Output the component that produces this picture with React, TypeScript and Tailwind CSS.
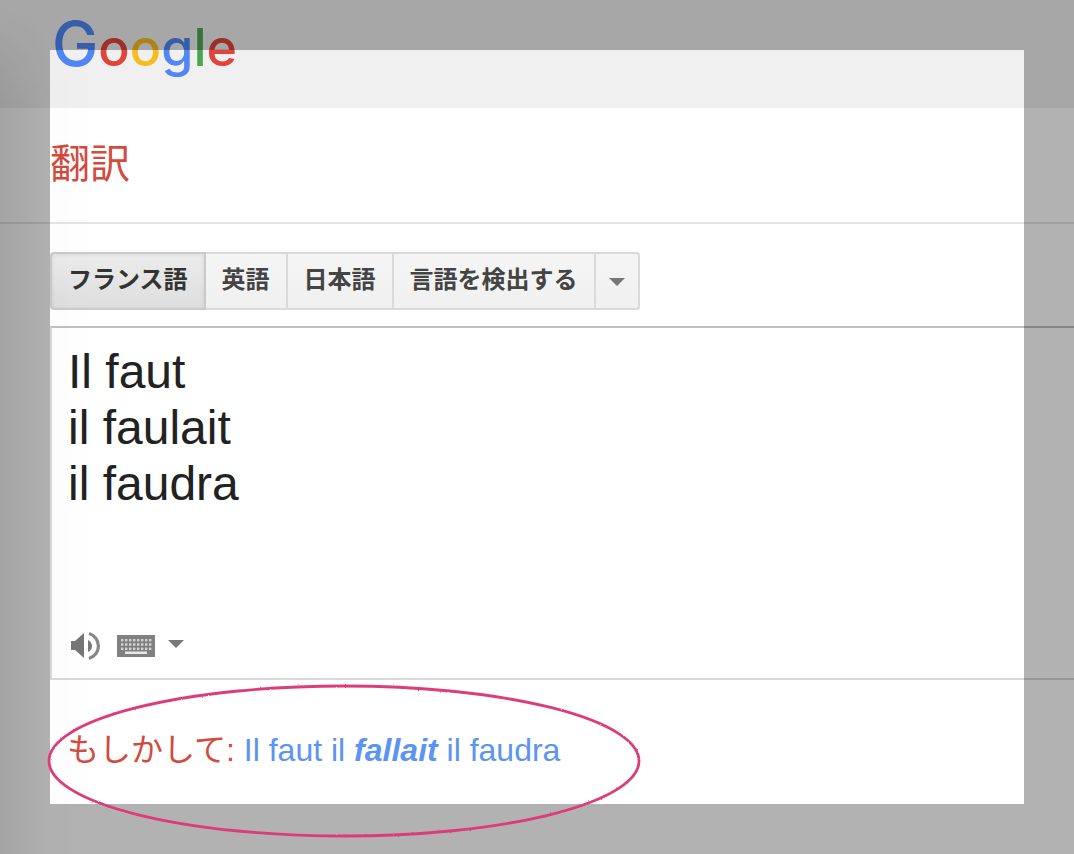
import { useState } from 'react';
import { clsx } from 'clsx';

const LOGO_LETTERS = [
    { char: 'G', style: 'text-[62px] text-[#5087f5]' },
    { char: 'o', style: 'text-[#e1443a]' },
    { char: 'o', style: 'text-[#f8bc20]' },
    { char: 'g', style: 'text-[#5087f5]' },
    { char: 'l', style: 'text-[#4ba652]' },
    { char: 'e', style: 'text-[#e1443a]' },
];

const LANGUAGES = ['フランス語', '英語', '日本語', '言語を検出する'];

const Logo = () => (
    <a href="#" aria-label="Google" className="block font-[Inter,sans-serif] text-[52px] leading-[60px] font-medium">
        {LOGO_LETTERS.map((letter, i) => (
            <span key={i} className={letter.style}>{letter.char}</span>
        ))}
    </a>
);

const Caret = () => (
    <svg width="16" height="8" viewBox="0 0 16 8" aria-hidden="true">
        <path d="M0 0h16L8 8z" fill="#777" />
    </svg>
);

const SpeakerIcon = () => (
    <svg width="30" height="30" viewBox="0 0 30 30" aria-hidden="true">
        <path d="M0 10h4l9-8v25l-9-8H0z" fill="#777" />
        <path d="M17 9q4 2 4 6t-4 6z" fill="#777" />
        <path d="M18 2.5a13 13 0 0 1 0 25" fill="none" stroke="#888" strokeWidth="3.2" />
    </svg>
);

const KeyboardIcon = () => (
    <svg width="40" height="24" viewBox="0 0 40 24" aria-hidden="true">
        <rect x="1" y="1" width="38" height="22" fill="#808080" />
        {[5, 9.3, 13.6].map((y) =>
            [5, 9, 13, 17, 21, 25, 29, 33].map((x) => (
                <rect key={`${x}-${y}`} x={x} y={y} width="2.4" height="2.4" fill="#d4d4d4" />
            ))
        )}
        <rect x="9" y="17.5" width="22" height="2.5" fill="#e8e8e8" />
    </svg>
);

// Hand-drawn ring around the suggestion
const Ring = () => (
    <svg
        className="absolute top-1 left-[45px] z-20 pointer-events-none"
        width="598"
        height="156"
        viewBox="0 0 598 156"
        aria-hidden="true"
    >
        <filter id="chalk">
            <feTurbulence type="fractalNoise" baseFrequency="0.6" numOctaves="1" seed="4" />
            <feDisplacementMap in="SourceGraphic" scale="2" xChannelSelector="R" yChannelSelector="G" />
        </filter>
        <ellipse cx="299" cy="77" rx="295" ry="75" fill="none" stroke="#dc3c79" strokeWidth="2.8" filter="url(#chalk)" />
    </svg>
);

export default function App() {
    const [active, setActive] = useState(LANGUAGES[0]);
    const [source, setSource] = useState('Il faut\nil faulait\nil faudra');

    return (
        <div className="relative min-h-screen overflow-hidden bg-white font-['Liberation_Sans','Noto_Sans_CJK_JP',sans-serif]">
            <header className="h-[108px] bg-[#f0f0f0] pt-3.5 pl-[52px]">
                <Logo />
            </header>

            <div className="h-[116px] border-b-2 border-[#e5e5e5] pt-7 pl-[50px]">
                <h1 className="text-[40px] leading-[56px] text-[#d34a3e]">翻訳</h1>
            </div>

            <main className="pt-7 pl-[50px]">
                <div className="flex h-[58px] w-fit rounded-[4px] bg-gradient-to-b from-[#f5f5f5] to-[#f0f0f0]">
                    {LANGUAGES.map((lang, i) => (
                        <button
                            key={lang}
                            type="button"
                            onClick={() => setActive(lang)}
                            className={clsx(
                                'border-y-2 border-r-2 px-4 pb-0.5 text-2xl font-bold whitespace-nowrap',
                                i === 0 && 'rounded-l-[4px] border-l-2',
                                lang === active
                                    ? 'border-[#cacaca] bg-gradient-to-b from-[#ececec] to-[#dedede] text-[#333] shadow-[inset_0_1px_4px_rgba(0,0,0,0.08)]'
                                    : 'border-[#dadada] text-[#444]'
                            )}
                        >
                            {lang}
                        </button>
                    ))}
                    <button
                        type="button"
                        aria-label="その他の言語"
                        className="flex w-11 items-center justify-center rounded-r-[4px] border-y-2 border-r-2 border-[#dadada] pt-0.5"
                    >
                        <Caret />
                    </button>
                </div>

                <section className="mt-4 border-t-2 border-b-2 border-l-2 border-t-[#c0c0c0] border-b-[#d9d9d9] border-l-[#d9d9d9]">
                    <textarea
                        aria-label="原文"
                        spellCheck={false}
                        value={source}
                        onChange={(e) => setSource(e.target.value)}
                        className="block h-[286px] w-full resize-none px-4 pt-4 text-5xl leading-[56px] text-[#222] outline-none"
                    />
                    <div className="flex h-16 items-center pl-[19px]">
                        <button type="button" aria-label="音声を聞く">
                            <SpeakerIcon />
                        </button>
                        <button type="button" aria-label="キーボード" className="ml-[15px]">
                            <KeyboardIcon />
                        </button>
                        <button type="button" aria-label="入力ツール" className="ml-3 pb-1">
                            <Caret />
                        </button>
                    </div>
                </section>
            </main>

            <section className="relative pt-[46px] pb-20 pl-[67px]">
                <p className="text-[32px] leading-[48px] text-[#d34a3e]">
                    もしかして:{' '}
                    <a href="#" className="text-[#5c94f2]">
                        Il faut il <b><i>fallait</i></b> il faudra
                    </a>
                </p>
                <Ring />
            </section>

            {/* Soft shade along the left edge and the dimmed frame */}
            <div className="pointer-events-none absolute top-0 bottom-0 left-0 w-24 bg-gradient-to-r from-black/8 via-black/1 to-transparent mask-t-from-[750px] mask-t-to-[850px]" />
            <div className="pointer-events-none absolute inset-0 z-10 border-[50px] border-black/30" />
        </div>
    );
}
